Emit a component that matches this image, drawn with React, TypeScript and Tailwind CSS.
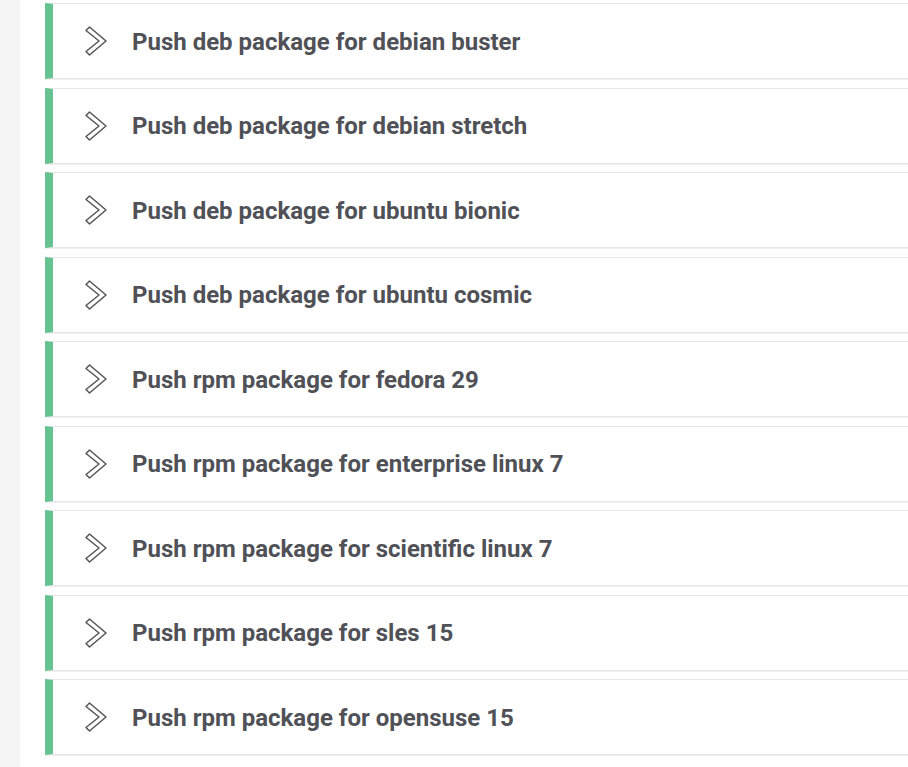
const jobs = [
  "Push deb package for debian buster",
  "Push deb package for debian stretch",
  "Push deb package for ubuntu bionic",
  "Push deb package for ubuntu cosmic",
  "Push rpm package for fedora 29",
  "Push rpm package for enterprise linux 7",
  "Push rpm package for scientific linux 7",
  "Push rpm package for sles 15",
  "Push rpm package for opensuse 15",
]

const StepIcon = () => (
  <svg width="24" height="32" viewBox="0 0 24 32" className="shrink-0">
    <path
      d="M2 5.5 L5.5 2 L22 16 L5.5 30 L2 26.5 L15 16 Z"
      fill="white"
      stroke="#555555"
      strokeWidth="1.5"
      strokeLinejoin="round"
    />
  </svg>
)

export default function App() {
  return (
    <div className="min-h-[767px] w-full overflow-hidden bg-[#f5f5f5] pl-5 font-['Roboto',sans-serif]">
      <div className="min-h-[767px] bg-white pl-[25px] pt-[3px]">
        <div className="flex flex-col gap-[8.5px]">
          {jobs.map((job) => (
            <div
              key={job}
              className="flex h-[76px] items-center border-y border-l-8 border-y-[#e6e6e6] border-l-[#66c290] bg-white pl-[31px] shadow-[0_1px_0_#f0f0f0]"
            >
              <StepIcon />
              <span className="ml-[24px] pt-[1px] text-[24px] font-bold text-[#4f5157]">{job}</span>
            </div>
          ))}
        </div>
      </div>
    </div>
  )
}
